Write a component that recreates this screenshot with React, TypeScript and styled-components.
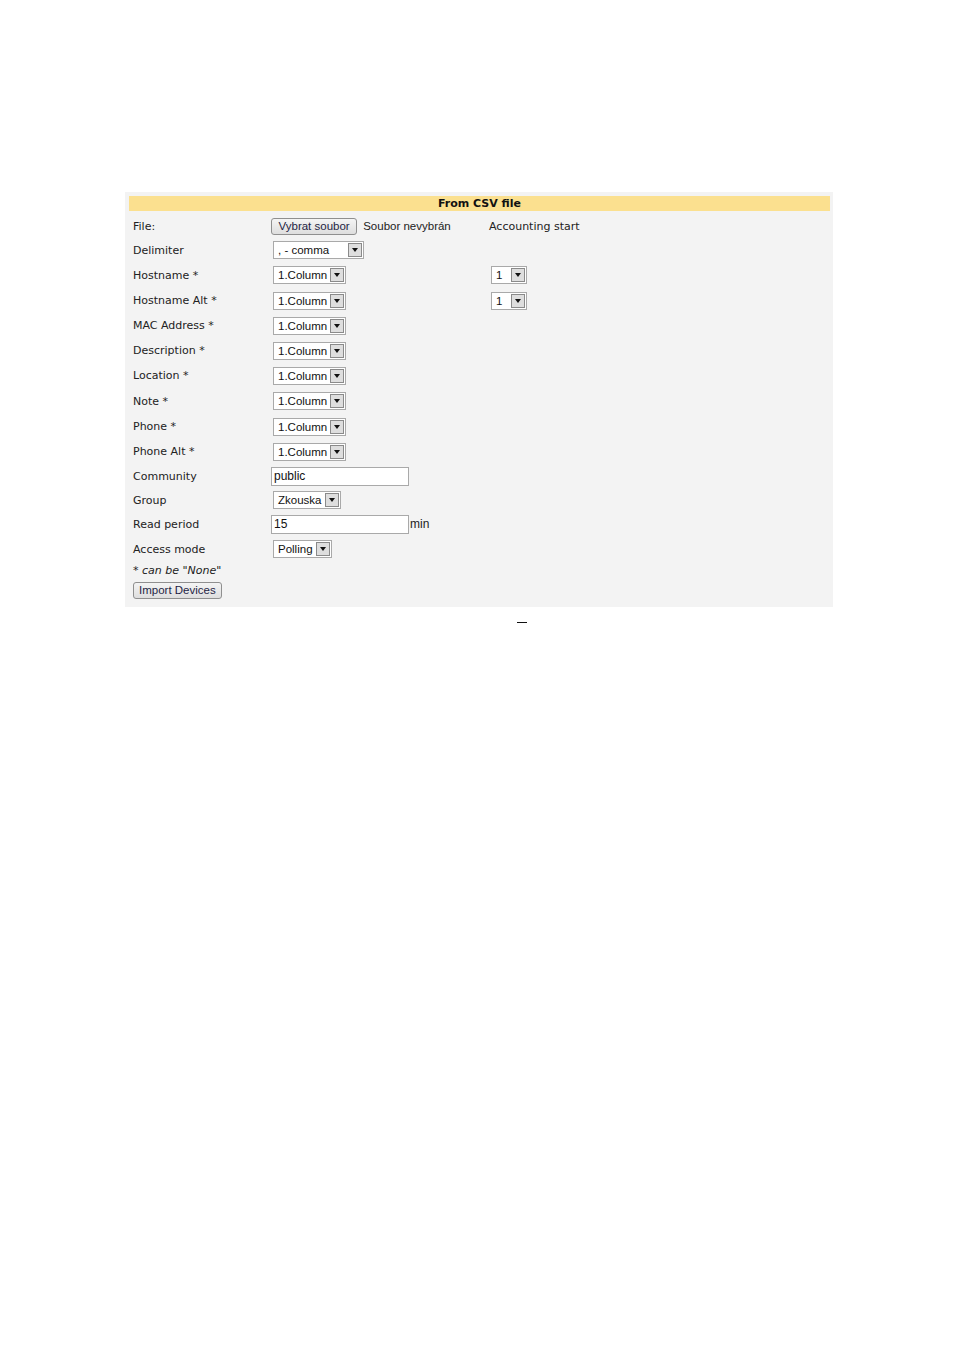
import styled, { createGlobalStyle } from 'styled-components'

const GlobalStyle = createGlobalStyle`
  html, body {
    margin: 0;
    padding: 0;
    background: #ffffff;
  }
  body {
    font-family: "DejaVu Sans", Verdana, sans-serif;
    font-size: 11px;
    color: #222222;
  }
`

const Page = styled.div`
  width: 954px;
  min-height: 1348px;
  padding-top: 192px;
  box-sizing: border-box;
`

const Panel = styled.div`
  margin-left: 125px;
  width: 708px;
  background: #f3f3f3;
  padding: 4px 3px 7px 4px;
  box-sizing: border-box;
`

const Header = styled.div`
  height: 15px;
  line-height: 16px;
  margin-bottom: 3px;
  background: #fbe08f;
  text-align: center;
  font-weight: bold;
  font-size: 11px;
  color: #111111;
`

const Row = styled.div<{ $h: number }>`
  display: grid;
  grid-template-columns: 138px 218px 1fr;
  align-items: center;
  height: ${(p) => p.$h}px;
  padding-left: 4px;
`

const Label = styled.div`
  white-space: nowrap;
`

const Cell = styled.div`
  display: flex;
  align-items: center;
  white-space: nowrap;
`

const Note = styled.div`
  font-style: italic;
  padding-left: 4px;
  height: 18px;
  line-height: 18px;
`

const Button = styled.button<{ $pad?: number }>`
  font-family: "Liberation Sans", Arial, sans-serif;
  font-size: 11.5px;
  color: #1f1f45;
  height: 17px;
  padding: 0 ${(p) => p.$pad ?? 5}px;
  border: 1px solid #8f8f8f;
  border-radius: 3px;
  background: linear-gradient(#f4f4f4, #dedede);
  line-height: 13px;
  margin: 0;
`

const FileText = styled.span`
  margin-left: 6px;
  font-family: "Liberation Sans", Arial, sans-serif;
  font-size: 11.5px;
`

const SelectBox = styled.div<{ $w: number }>`
  display: flex;
  align-items: center;
  justify-content: space-between;
  margin-left: 2px;
  width: ${(p) => p.$w}px;
  height: 18px;
  box-sizing: border-box;
  border: 1px solid #a9a9a9;
  background: #ffffff;
  padding: 1px;
  font-family: "Liberation Sans", Arial, sans-serif;
  font-size: 11.5px;
  color: #111111;
`

const SelectText = styled.span`
  padding-left: 3px;
`

const Arrow = styled.span`
  width: 14px;
  height: 14px;
  box-sizing: border-box;
  border: 1px solid #8a8a8a;
  background: #dedede;
  display: flex;
  align-items: center;
  justify-content: center;
  &::after {
    content: '';
    border-left: 3.5px solid transparent;
    border-right: 3.5px solid transparent;
    border-top: 4px solid #111111;
  }
`

const TextInput = styled.div`
  width: 138px;
  height: 19px;
  box-sizing: border-box;
  border: 1px solid #a9a9a9;
  background: #ffffff;
  font-family: "Liberation Sans", Arial, sans-serif;
  font-size: 12px;
  line-height: 17px;
  padding-left: 2px;
  color: #111111;
`

const Unit = styled.span`
  font-family: "Liberation Sans", Arial, sans-serif;
  font-size: 12px;
  margin-left: 1px;
`

const Dash = styled.div`
  margin: 15px 0 0 517px;
  width: 10px;
  height: 1px;
  border-top: 1px solid #111111;
`

function Select({ value, width }: { value: string; width: number }) {
  return (
    <SelectBox $w={width}>
      <SelectText>{value}</SelectText>
      <Arrow />
    </SelectBox>
  )
}

const columnRows = [
  { label: 'Hostname *', h: 26, start: true },
  { label: 'Hostname Alt *', h: 25, start: true },
  { label: 'MAC Address *', h: 25 },
  { label: 'Description *', h: 25 },
  { label: 'Location *', h: 25 },
  { label: 'Note *', h: 26 },
  { label: 'Phone *', h: 25 },
  { label: 'Phone Alt *', h: 25 },
]

export default function App() {
  return (
    <>
      <GlobalStyle />
      <Page>
        <Panel>
          <Header>From CSV file</Header>
          <Row $h={24}>
            <Label>File:</Label>
            <Cell>
              <Button $pad={6.5}>Vybrat soubor</Button>
              <FileText>Soubor nevybrán</FileText>
            </Cell>
            <Cell>Accounting start</Cell>
          </Row>
          <Row $h={24}>
            <Label>Delimiter</Label>
            <Cell>
              <Select value=", - comma" width={91} />
            </Cell>
          </Row>
          {columnRows.map((r) => (
            <Row key={r.label} $h={r.h}>
              <Label>{r.label}</Label>
              <Cell>
                <Select value="1.Column" width={73} />
              </Cell>
              <Cell>{r.start && <Select value="1" width={36} />}</Cell>
            </Row>
          ))}
          <Row $h={24}>
            <Label>Community</Label>
            <Cell>
              <TextInput>public</TextInput>
            </Cell>
          </Row>
          <Row $h={24}>
            <Label>Group</Label>
            <Cell>
              <Select value="Zkouska" width={68} />
            </Cell>
          </Row>
          <Row $h={24}>
            <Label>Read period</Label>
            <Cell>
              <TextInput>15</TextInput>
              <Unit>min</Unit>
            </Cell>
          </Row>
          <Row $h={26}>
            <Label>Access mode</Label>
            <Cell>
              <Select value="Polling" width={59} />
            </Cell>
          </Row>
          <Note>* can be "None"</Note>
          <Row $h={20}>
            <Cell>
              <Button>Import Devices</Button>
            </Cell>
          </Row>
        </Panel>
        <Dash />
      </Page>
    </>
  )
}
